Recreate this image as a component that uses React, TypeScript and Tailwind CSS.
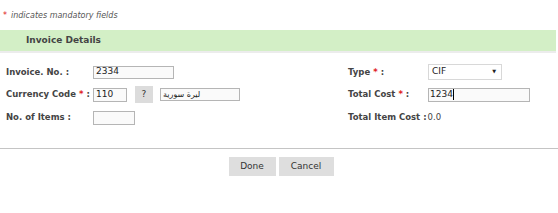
import React from "react";

const font = { fontFamily: '"DejaVu Sans", Verdana, sans-serif' };

function Req() {
  return <span className="text-[#e02020] mx-[3px]">*</span>;
}

export default function App() {
  return (
    <div className="w-[558px] h-[213px] bg-white text-[#444] overflow-hidden" style={font}>
      <div className="h-[30px] flex items-center pl-[3px] pt-[1px] text-[8px] italic text-[#555]">
        <span className="text-[#e02020] not-italic mr-[4px]">*</span>
        <span>indicates mandatory fields</span>
      </div>
      <div className="w-[556px] h-[21px] bg-[#d3efc6] flex items-center pl-[26px] text-[9px] font-bold text-[#444]">
        Invoice Details
      </div>
      <div className="w-[556px] h-[2px] bg-[#ececec]" />
      <div className="flex flex-col pt-[8px] text-[8.5px] font-bold">
        <div className="flex h-[22px] items-center">
          <div className="w-[348px] flex items-center pl-[6px]">
            <span className="w-[87px]">Invoice. No. :</span>
            <div className="w-[81px] h-[13px] border border-[#b5b5b5] bg-[#fafafa] font-normal text-[9px] text-[#222] flex items-center pl-[2px]">2334</div>
          </div>
          <div className="flex items-center">
            <span className="w-[80px]">Type<Req />:</span>
            <div className="w-[74px] h-[16px] border border-[#d8d8d8] bg-white font-normal text-[9px] text-[#222] flex items-center justify-between pl-[3px] pr-[5px]">
              <span>CIF</span>
              <span className="text-[5px]">▼</span>
            </div>
          </div>
        </div>
        <div className="flex h-[23px] items-center">
          <div className="w-[348px] flex items-center pl-[6px]">
            <span className="w-[87px]">Currency Code<Req />:</span>
            <div className="w-[34px] h-[14px] border border-[#b5b5b5] bg-[#fafafa] font-normal text-[9px] text-[#222] flex items-center pl-[2px]">110</div>
            <div className="ml-[8px] w-[18px] h-[17px] bg-[#dcdcdc] font-normal text-[9px] text-[#333] flex items-center justify-center">?</div>
            <div className="ml-[7px] w-[80px] h-[13px] border border-[#b5b5b5] bg-[#fafafa] font-normal text-[8px] text-[#222] flex items-center pl-[2px]" style={{ fontFamily: '"DejaVu Sans", "Noto Sans", sans-serif' }}>ليرة سورية</div>
          </div>
          <div className="flex items-center">
            <span className="w-[80px]">Total Cost<Req />:</span>
            <div className="w-[102px] h-[14px] border border-[#b5b5b5] bg-[#fafafa] font-normal text-[9px] text-[#222] flex items-center pl-[1px]">
              1234<span className="w-px h-[11px] bg-black" />
            </div>
          </div>
        </div>
        <div className="flex h-[23px] items-center">
          <div className="w-[348px] flex items-center pl-[6px]">
            <span className="w-[87px]">No. of Items :</span>
            <div className="w-[42px] h-[14px] border border-[#b5b5b5] bg-[#fafafa]" />
          </div>
          <div className="flex items-center">
            <span>Total Item Cost :</span>
            <span className="font-normal ml-[1px]">0.0</span>
          </div>
        </div>
      </div>
      <div className="mt-[19px] w-[558px] h-[1px] bg-[#c4c4c4]" />
      <div className="flex justify-center pt-[8px] pl-[4px] gap-[3px] text-[9px] text-[#333]">
        <div className="w-[47px] h-[19px] bg-[#dedede] flex items-center justify-center">Done</div>
        <div className="w-[55px] h-[19px] bg-[#dedede] flex items-center justify-center">Cancel</div>
      </div>
    </div>
  );
}
